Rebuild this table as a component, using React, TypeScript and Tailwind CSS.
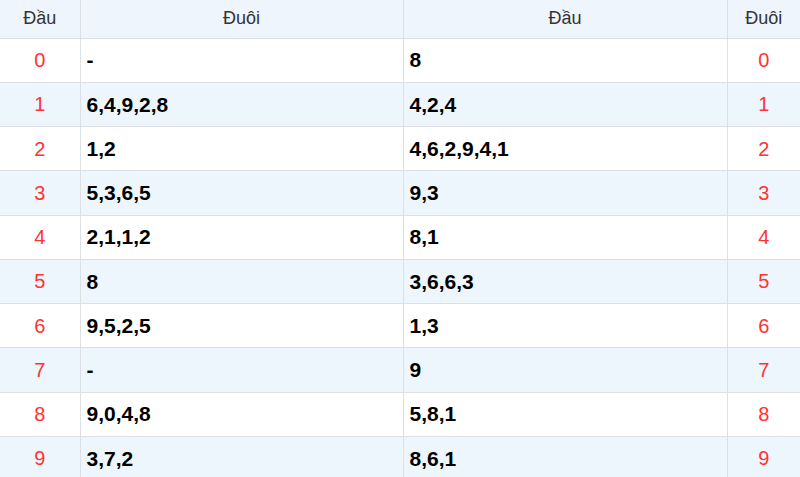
const ROWS: { dau: string; duoi: string }[] = [
  { dau: "-", duoi: "8" },
  { dau: "6,4,9,2,8", duoi: "4,2,4" },
  { dau: "1,2", duoi: "4,6,2,9,4,1" },
  { dau: "5,3,6,5", duoi: "9,3" },
  { dau: "2,1,1,2", duoi: "8,1" },
  { dau: "8", duoi: "3,6,6,3" },
  { dau: "9,5,2,5", duoi: "1,3" },
  { dau: "-", duoi: "9" },
  { dau: "9,0,4,8", duoi: "5,8,1" },
  { dau: "3,7,2", duoi: "8,6,1" },
];

export default function App() {
  return (
    <div className="w-[800px] h-[477px] overflow-hidden bg-white font-['Liberation_Sans',Arial,sans-serif]">
      <table className="w-full table-fixed border-collapse">
        <colgroup>
          <col className="w-[80px]" />
          <col className="w-[323px]" />
          <col className="w-[324px]" />
          <col />
        </colgroup>
        <thead>
          <tr className="h-[38px] bg-[#eef5fd] text-[18px] text-[#333]">
            <th className="border-r border-b border-[#dcdfe3] font-normal">Đầu</th>
            <th className="border-r border-b border-[#dcdfe3] font-normal">Đuôi</th>
            <th className="border-r border-b border-[#dcdfe3] font-normal">Đầu</th>
            <th className="border-b border-[#dcdfe3] font-normal">Đuôi</th>
          </tr>
        </thead>
        <tbody>
          {ROWS.map((row, i) => (
            <tr key={i} className={i % 2 === 1 ? "h-[44.25px] bg-[#eef6fd]" : "h-[44.25px] bg-white"}>
              <td className="border-r border-b border-[#dcdfe3] text-center text-[20px] text-[#f33]">{i}</td>
              <td className="border-r border-b border-[#dcdfe3] px-1.5 text-[21px] font-bold text-black">{row.dau}</td>
              <td className="border-r border-b border-[#dcdfe3] px-1.5 text-[21px] font-bold text-black">{row.duoi}</td>
              <td className="border-b border-[#dcdfe3] text-center text-[20px] text-[#f33]">{i}</td>
            </tr>
          ))}
        </tbody>
      </table>
    </div>
  );
}
